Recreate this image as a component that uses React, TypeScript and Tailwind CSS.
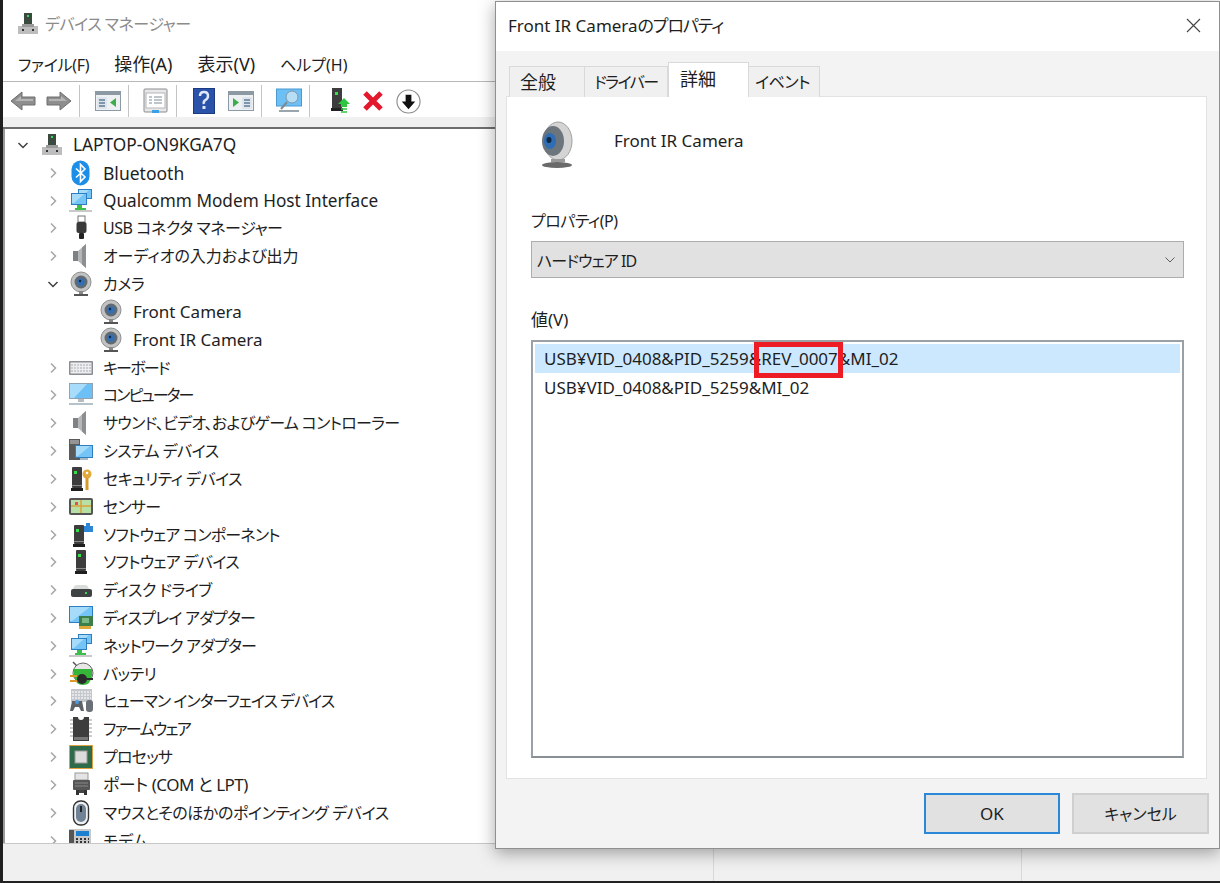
import React from "react";

const font = { fontFamily: '"Noto Sans","Noto Sans CJK JP",sans-serif' };

const S = ({ children, size = 26, vb = 26 }: { children: React.ReactNode; size?: number; vb?: number }) => (
  <svg width={size} height={size} viewBox={`0 0 ${vb} ${vb}`} className="shrink-0">{children}</svg>
);

const Tower = ({ x = 8, y = 1, w = 11, h = 23 }: { x?: number; y?: number; w?: number; h?: number }) => (
  <g>
    <rect x={x + 1} y={y} width={w - 2} height={h - 3} rx="1" fill="#3d3d3d" />
    <rect x={x + 3} y={y + 4} width="3" height="3" fill="#35e04a" />
    <rect x={x} y={y + h - 3} width={w} height="3" fill="#1f1f1f" />
    <rect x={x + 1} y={y + h - 6} width={w - 2} height="1" fill="#8a8a8a" />
  </g>
);
const Mon = ({ x, y, w, h }: { x: number; y: number; w: number; h: number }) => (
  <g>
    <rect x={x} y={y} width={w} height={h} fill="#2e7fc2" />
    <rect x={x + 1} y={y + 1} width={w - 2} height={h - 2} fill="#74c5f5" />
    <path d={`M${x + 1} ${y + 1}h${w - 4}l-${w - 6} ${h - 3}h-2z`} fill="#a6dcfa" />
  </g>
);
const Laptop = () => (
  <S size={24} vb={24}>
    <rect x="8" y="1" width="8" height="11" fill="#3a4a3e" />
    <rect x="11" y="3" width="2" height="2" fill="#3fd45a" />
    <path d="M2 14h20v8H2z" fill="#bdbdbd" />
    <path d="M6 12h12v3H6z" fill="#9a9a9a" />
    <rect x="6" y="17" width="2" height="2" fill="#333" />
    <rect x="16" y="17" width="2" height="2" fill="#333" />
  </S>
);
const Bluetooth = () => (
  <S>
    <rect x="3.500" y="0.500" width="18" height="25" rx="9" fill="#1c8ee8" />
    <path d="M8 8.500l9 8.500-4.500 4.500V4.500l4.500 4.500-9 8.500" fill="none" stroke="#fff" strokeWidth="1.600" />
  </S>
);
const Network = () => (
  <S>
    <Mon x={10} y={1} w={14} h={10} />
    <Mon x={3} y={5} w={16} h={12} />
    <path d="M9 17h5v3h4v2H7v-2h2z" fill="#3cc04a" />
    <rect x="1" y="22" width="23" height="2" fill="#c9c9c9" />
  </S>
);
const Usb = () => (
  <S>
    <rect x="10" y="1" width="7" height="6" fill="#fff" stroke="#777" />
    <rect x="8.500" y="7" width="10" height="11" rx="2" fill="#3a3a3a" />
    <rect x="11" y="18" width="5" height="6" rx="1" fill="#222" />
  </S>
);
const Speaker = () => (
  <S>
    <path d="M18 1v24L10 18H5V8h5z" fill="#b4b6b8" />
    <path d="M14 4.500l4-3.500v24l-4-3.500z" fill="#8c8f92" />
    <rect x="5" y="8" width="5" height="10" fill="#7f8285" />
  </S>
);
const Cam = ({ size = 26 }: { size?: number }) => (
  <S size={size}>
    <circle cx="13" cy="11" r="10" fill="#c2c2c2" stroke="#8f8f8f" />
    <circle cx="13" cy="11" r="6.500" fill="#5f6a75" />
    <circle cx="13" cy="11" r="3.500" fill="#2f6fb8" />
    <circle cx="12" cy="10" r="1.200" fill="#10243d" />
    <rect x="11" y="20" width="4" height="3" fill="#888" />
    <rect x="6" y="23" width="14" height="2" fill="#555" />
  </S>
);
const Keyboard = () => (
  <S>
    <rect x="1" y="6" width="24" height="14" rx="1" fill="#8a8d90" />
    <rect x="2.500" y="7.500" width="21" height="11" fill="#eceef0" />
    <path d="M3 10h20M3 13h20M3 16h20" stroke="#a9acaf" strokeWidth="1.200" strokeDasharray="2 1" />
  </S>
);
const Computer = () => (
  <S>
    <rect x="1" y="1" width="24" height="16" fill="#8fa3b3" />
    <rect x="2" y="2" width="22" height="14" fill="#6cc0f5" />
    <path d="M2 2h17L6 16H2z" fill="#a8dcfb" />
    <rect x="10" y="17" width="6" height="3" fill="#b8bdc2" />
    <rect x="1" y="21" width="24" height="2" fill="#b4c2cc" />
  </S>
);
const System = () => (
  <S>
    <rect x="1" y="1" width="11" height="21" fill="#5a5a5a" />
    <path d="M2 3h9M2 5h9" stroke="#cfcfcf" />
    <Mon x={7} y={7} w={18} h={13} />
    <rect x="12" y="20" width="8" height="2" fill="#a9b8c2" />
  </S>
);
const Security = () => (
  <S>
    <Tower x={3} y={1} w={12} h={24} />
    <circle cx="19" cy="8" r="4.500" fill="#e0a93a" />
    <circle cx="19" cy="7" r="1.300" fill="#fff" />
    <path d="M17.500 12h3v12h-3z" fill="#d59a2a" />
  </S>
);
const Sensor = () => (
  <S>
    <rect x="1" y="4" width="24" height="17" rx="2" fill="#555" />
    <rect x="3" y="6" width="20" height="13" fill="#b8e0a5" />
    <path d="M13 6v13M3 12h20" stroke="#d9a13a" strokeWidth="1.500" />
    <rect x="7" y="8" width="3" height="3" fill="#e0505a" />
  </S>
);
const SoftComp = () => (
  <S>
    <Tower x={5} y={3} w={12} h={22} />
    <path d="M18 1h4v3h3v6h-9v-6h2z" fill="#2e86d6" />
  </S>
);
const SoftDev = () => (
  <S><Tower x={7} y={1} w={12} h={24} /></S>
);
const Disk = () => (
  <S>
    <path d="M5 12q1-4 4-4h8q3 0 4 4z" fill="#d9dcd9" />
    <rect x="3" y="12" width="21" height="8" rx="2" fill="#3f4242" />
    <rect x="17" y="15" width="2" height="2" fill="#3fd45a" />
  </S>
);
const Display = () => (
  <S>
    <Mon x={1} y={1} w={24} h={17} />
    <rect x="11" y="11" width="14" height="10" fill="#3c7f4a" />
    <rect x="14" y="13" width="7" height="5" fill="#7cb887" />
    <rect x="11" y="21" width="12" height="3" fill="#e0a93a" />
  </S>
);
const Battery = () => (
  <S>
    <path d="M5 1l5 5" stroke="#555" strokeWidth="1.500" />
    <circle cx="15" cy="12" r="10" fill="#e7e7e7" stroke="#666" />
    <path d="M6 8h18v6q-1 10-9 10t-9-10z" fill="#35b53a" />
    <circle cx="14" cy="18" r="5" fill="#2a2a2a" />
    <path d="M2 15h7M2 20h7" stroke="#d99a2a" strokeWidth="2" />
    <path d="M18 18h7" stroke="#2a2a2a" strokeWidth="2" />
  </S>
);
const Hid = () => (
  <S>
    <rect x="3" y="1" width="21" height="13" fill="#c4c8cc" />
    <path d="M4 4h19M4 7h19M4 10h19" stroke="#eef0f2" strokeWidth="1.400" strokeDasharray="2 1" />
    <path d="M2 23l2-10h10l2 10h-3l-2-4H7l-2 4z" fill="#5c6268" />
    <circle cx="9" cy="14" r="2" fill="#4a9be0" />
    <rect x="18" y="12" width="7" height="12" rx="3" fill="#6a7076" />
  </S>
);
const Firmware = () => (
  <S>
    <path d="M5 1h5a3 3 0 0 0 6 0h5v24H5z" fill="#3d3d3d" />
    <path d="M2 4h3M2 8h3M2 12h3M2 16h3M2 20h3M21 4h3M21 8h3M21 12h3M21 16h3M21 20h3" stroke="#999" />
    <rect x="6" y="21" width="14" height="3" fill="#777" />
  </S>
);
const Cpu = () => (
  <S>
    <rect x="1" y="1" width="24" height="24" fill="#e0a040" />
    <rect x="2" y="2" width="22" height="22" fill="#2f6b4a" />
    <rect x="7" y="7" width="12" height="12" fill="#dcdcdc" stroke="#999" />
  </S>
);
const Port = () => (
  <S>
    <rect x="7" y="1" width="13" height="7" fill="#e4e4e4" stroke="#999" />
    <rect x="5" y="8" width="17" height="10" rx="1" fill="#555" />
    <path d="M7 11h13M7 14h13" stroke="#888" />
    <rect x="8" y="18" width="3" height="5" fill="#333" />
    <rect x="16" y="18" width="3" height="5" fill="#333" />
    <rect x="11" y="18" width="5" height="3" fill="#444" />
  </S>
);
const Mouse = () => (
  <S>
    <rect x="5.500" y="1" width="15" height="24" rx="7" fill="#eef0f2" stroke="#333" strokeWidth="1.400" />
    <rect x="8" y="4" width="10" height="18" rx="5" fill="#6f8296" />
    <rect x="12" y="6" width="2" height="6" fill="#222" />
  </S>
);
const Modem = () => (
  <S>
    <rect x="1" y="1" width="22" height="24" fill="#c8c8c8" />
    <rect x="1" y="2" width="5" height="21" fill="#555" />
    <rect x="8" y="3" width="13" height="5" fill="#1c7fd0" />
    <path d="M8 11h13M8 14h13M8 17h13" stroke="#333" strokeWidth="2" strokeDasharray="2 2" />
  </S>
);

const Chevron = ({ open }: { open?: boolean }) => (
  <svg width="12" height="12" viewBox="0 0 12 12" className="shrink-0">
    {open ? (
      <path d="M1.500 4l4.500 4.500L10.500 4" fill="none" stroke="#404040" strokeWidth="1.500" />
    ) : (
      <path d="M4 1.500L8.500 6 4 10.500" fill="none" stroke="#a6a6a6" strokeWidth="1.500" />
    )}
  </svg>
);

const rows: { label: string; icon: React.ReactNode; open?: boolean; child?: boolean; t: string }[] = [
  { label: "Bluetooth", icon: <Bluetooth />, t: "text-[17.500px]" },
  { label: "Qualcomm Modem Host Interface", icon: <Network />, t: "text-[17.200px]" },
  { label: "USB コネクタ マネージャー", icon: <Usb />, t: "text-[16px] tracking-[-0.450px]" },
  { label: "オーディオの入力および出力", icon: <Speaker />, t: "text-[16px]" },
  { label: "カメラ", icon: <Cam />, open: true, t: "text-[16px] tracking-[-0.500px]" },
  { label: "Front Camera", icon: <Cam />, child: true, t: "text-[17px]" },
  { label: "Front IR Camera", icon: <Cam />, child: true, t: "text-[17px]" },
  { label: "キーボード", icon: <Keyboard />, t: "text-[16px] tracking-[-1.800px]" },
  { label: "コンピューター", icon: <Computer />, t: "text-[16px] tracking-[-2px]" },
  { label: "サウンド、ビデオ、およびゲーム コントローラー", icon: <Speaker />, t: "text-[16px] tracking-[-0.700px]" },
  { label: "システム デバイス", icon: <System />, t: "text-[16px] tracking-[-0.550px]" },
  { label: "セキュリティ デバイス", icon: <Security />, t: "text-[16px] tracking-[-0.550px]" },
  { label: "センサー", icon: <Sensor />, t: "text-[16px] tracking-[-0.750px]" },
  { label: "ソフトウェア コンポーネント", icon: <SoftComp />, t: "text-[16px] tracking-[-0.800px]" },
  { label: "ソフトウェア デバイス", icon: <SoftDev />, t: "text-[16px] tracking-[-0.700px]" },
  { label: "ディスク ドライブ", icon: <Disk />, t: "text-[16px] tracking-[-0.550px]" },
  { label: "ディスプレイ アダプター", icon: <Display />, t: "text-[16px] tracking-[-0.800px]" },
  { label: "ネットワーク アダプター", icon: <Network />, t: "text-[16px] tracking-[-0.800px]" },
  { label: "バッテリ", icon: <Battery />, t: "text-[16px] tracking-[-0.500px]" },
  { label: "ヒューマン インターフェイス デバイス", icon: <Hid />, t: "text-[16px] tracking-[-1px]" },
  { label: "ファームウェア", icon: <Firmware />, t: "text-[16px] tracking-[-1.700px]" },
  { label: "プロセッサ", icon: <Cpu />, t: "text-[16px] tracking-[-0.800px]" },
  { label: "ポート (COM と LPT)", icon: <Port />, t: "text-[17px] tracking-[-0.500px]" },
  { label: "マウスとそのほかのポインティング デバイス", icon: <Mouse />, t: "text-[16px] tracking-[-0.400px]" },
  { label: "モデム", icon: <Modem />, t: "text-[16px]" },
];

const Sep = () => <div className="w-px h-[32px] bg-[#c4c4c4] shrink-0" />;

const ArrowBtn = ({ flip }: { flip?: boolean }) => (
  <svg width="26" height="22" viewBox="0 0 26 22" style={flip ? { transform: "scaleX(-1)" } : undefined}>
    <path d="M1 11L12 2v5h13v8H12v5z" fill="#8e8e8e" stroke="#6f6f6f" />
    <path d="M5 11l6-5v3h12v2z" fill="#b5b5b5" />
  </svg>
);
const WinIcon = ({ right }: { right?: boolean }) => (
  <svg width="26" height="22" viewBox="0 0 26 22">
    <rect x="0.500" y="1.500" width="25" height="19" fill="#eef1f3" stroke="#8d9aa3" />
    <rect x="1" y="2" width="24" height="3" fill="#8d9aa3" />
    {right ? (
      <>
        <path d="M5 8l6 4.500L5 17z" fill="#3fae4a" />
        <rect x="14" y="7" width="10" height="12" fill="#dfe5ea" />
        <path d="M16 10h6M16 13h6M16 16h6" stroke="#5b7c99" strokeWidth="1.500" />
      </>
    ) : (
      <>
        <rect x="2" y="7" width="10" height="12" fill="#dfe5ea" />
        <path d="M4 10h6M4 13h6M4 16h6" stroke="#5b7c99" strokeWidth="1.500" />
        <path d="M21 8l-6 4.500L21 17z" fill="#3fae4a" />
      </>
    )}
  </svg>
);

function Toolbar() {
  return (
    <div className="h-[35px] flex items-center pl-[7px] pt-[3px] shrink-0">
      <ArrowBtn />
      <div className="w-[10px]" />
      <ArrowBtn flip />
      <div className="w-[7px]" />
      <Sep />
      <div className="w-[15px]" />
      <WinIcon />
      <div className="w-[7px]" />
      <Sep />
      <div className="w-[14px]" />
      <svg width="25" height="26" viewBox="0 0 25 26">
        <rect x="1" y="1" width="23" height="23" rx="1" fill="#e6e8ea" stroke="#8c8c8c" />
        <rect x="3" y="5" width="19" height="15" fill="#fff" stroke="#b5b5b5" />
        <path d="M6 9h3M6 12h3M6 15h3M11 9h8M11 12h8M11 15h8" stroke="#7d8c99" />
        <rect x="9" y="22" width="7" height="3" fill="#39a0e8" />
      </svg>
      <div className="w-[8px]" />
      <Sep />
      <div className="w-[16px]" />
      <svg width="22" height="26" viewBox="0 0 22 26">
        <rect x="0.500" y="0.500" width="21" height="25" fill="#2a52a8" stroke="#1c3a80" />
        <path d="M7 8q0-4 4-4t4 4q0 2.500-2.500 4T11 16" fill="none" stroke="#dfe8fb" strokeWidth="2.500" />
        <rect x="9.500" y="18" width="3" height="3" fill="#dfe8fb" />
      </svg>
      <div className="w-[13px]" />
      <WinIcon right />
      <div className="w-[7px]" />
      <Sep />
      <div className="w-[14px]" />
      <svg width="26" height="26" viewBox="0 0 26 26">
        <rect x="0.500" y="1" width="25" height="17" fill="#6cc0f5" stroke="#4a9ad0" />
        <circle cx="16" cy="9" r="6" fill="#b7def5" stroke="#7e97a8" />
        <path d="M11 14l-6 7" stroke="#7e8a92" strokeWidth="2" />
        <rect x="3" y="22" width="20" height="2" fill="#9aa5ad" />
      </svg>
      <div className="w-[7px]" />
      <Sep />
      <div className="w-[20px]" />
      <svg width="22" height="28" viewBox="0 0 22 28">
        <rect x="2" y="1" width="10" height="20" fill="#3d3d3d" />
        <rect x="5" y="5" width="3" height="3" fill="#35e04a" />
        <rect x="1" y="21" width="12" height="3" fill="#222" />
        <path d="M8 17l6-6 6 6h-3v3h-6v-3z" fill="#2ec63f" />
        <path d="M11 22h6M11 25h6" stroke="#2ec63f" strokeWidth="1.500" />
      </svg>
      <div className="w-[10px]" />
      <svg width="22" height="22" viewBox="0 0 22 22">
        <path d="M3 3l16 16M19 3L3 19" stroke="#e3182d" strokeWidth="5" />
      </svg>
      <div className="w-[12px]" />
      <svg width="25" height="25" viewBox="0 0 26 26">
        <circle cx="13" cy="13" r="12" fill="#fff" stroke="#8d8d8d" strokeWidth="1.200" />
        <path d="M10 6h6v7h4l-7 8-7-8h4z" fill="#111" />
      </svg>
    </div>
  );
}

function DeviceManager() {
  return (
    <div className="w-full h-[881px] bg-white border-l-[3px] border-l-[#1f1f1f] flex flex-col">
      <div className="h-[48px] flex items-center pl-[13px] gap-[5px] shrink-0">
        <Laptop />
        <span className="text-[16px] text-[#8c8c8c] tracking-[-0.500px]">デバイス マネージャー</span>
      </div>
      <div className="h-[34px] flex items-center pl-[15px] gap-[25px] text-[#1e1e1e] border-b border-b-[#b8b8b8] shrink-0">
        <span className="text-[16px] tracking-[-0.300px]">ファイル(F)</span>
        <span className="text-[18px]">操作(A)</span>
        <span className="text-[18px]">表示(V)</span>
        <span className="text-[16px]">ヘルプ(H)</span>
      </div>
      <Toolbar />
      <div className="h-[10px] bg-[#f0f0f0] shrink-0" />
      <div className="h-[2px] bg-[#6d6d6d] shrink-0" />
      <div className="flex-1 min-h-0 overflow-hidden border-l-2 border-l-[#9a9a9a] pt-[2px] pl-[12px]">
        <div className="h-[27.830px] flex items-center">
          <Chevron open />
          <div className="w-[11px]" />
          <Laptop />
          <span className="ml-[9px] text-[17.300px] text-[#1e1e1e]">LAPTOP-ON9KGA7Q</span>
        </div>
        {rows.map((r) => (
          <div key={r.label} className="h-[27.830px] flex items-center">
            {r.child ? (
              <div className="w-[81px] shrink-0" />
            ) : (
              <div className="w-[51px] shrink-0 pl-[30px] flex">
                <Chevron open={r.open} />
              </div>
            )}
            {r.icon}
            <span className={`ml-[9px] text-[#1e1e1e] whitespace-nowrap ${r.t}`}>{r.label}</span>
          </div>
        ))}
      </div>
      <div className="h-[38px] bg-[#f0f0f0] border-t border-t-[#c8c8c8] shrink-0 flex">
        <div className="w-[711px] border-r border-r-[#d8d8d8]" />
        <div className="w-[308px] border-r border-r-[#d8d8d8]" />
      </div>
    </div>
  );
}

function Dialog() {
  return (
    <div className="absolute left-[495px] top-[1px] w-[725px] h-[848px] bg-[#f3f3f3] border border-[#8f8f8f] shadow-[0_4px_16px_rgba(0,0,0,0.350)] flex flex-col text-[#1e1e1e]">
      <div className="h-[49px] bg-white flex items-center justify-between pl-[12px] pr-[18px] pb-[2px] shrink-0">
        <span className="text-[17px]">Front IR Camera<span className="tracking-[-1.100px]">のプロパティ</span></span>
        <svg width="15" height="15" viewBox="0 0 15 15">
          <path d="M1 1l13 13M14 1L1 14" stroke="#444" strokeWidth="1.100" />
        </svg>
      </div>
      <div className="flex items-end pl-[13px] mt-[11px] h-[35px] shrink-0 relative z-10 -mb-px whitespace-nowrap">
        <div className="w-[76px] h-[31px] bg-[#f0f0f0] border border-b-0 border-[#d9d9d9] flex items-center pl-[10px] text-[18px]">全般</div>
        <div className="w-[83px] h-[31px] bg-[#f0f0f0] border border-b-0 border-l-0 border-[#d9d9d9] flex items-center pl-[9px] text-[16px] tracking-[-1.500px]">ドライバー</div>
        <div className="w-[81px] h-[35px] bg-white border border-b-0 border-[#d9d9d9] flex items-start pt-[3px] pl-[11px] text-[18px]">詳細</div>
        <div className="w-[71px] h-[31px] bg-[#f0f0f0] border border-b-0 border-l-0 border-[#d9d9d9] flex items-center pl-[6px] text-[16px] tracking-[-0.500px]">イベント</div>
      </div>
      <div className="ml-[10px] mr-[12px] h-[683px] bg-white border border-[#e2e2e2] pt-[24px] pl-[24px] pr-[22px] shrink-0 flex flex-col">
        <div className="flex items-center h-[48px] shrink-0">
          <svg width="34" height="48" viewBox="0 0 34 48" className="shrink-0 ml-[8px]">
            <ellipse cx="19" cy="20" rx="14" ry="19" fill="#d4d4d4" stroke="#a0a0a0" />
            <ellipse cx="14" cy="20" rx="11" ry="15" fill="#6d757c" />
            <ellipse cx="11" cy="20" rx="6" ry="8" fill="#2f6db5" />
            <ellipse cx="10" cy="19" rx="2.500" ry="3" fill="#0e2742" />
            <path d="M12 38h14v3H12z" fill="#9a9a9a" />
            <ellipse cx="18" cy="44" rx="15" ry="3" fill="#6a6a6a" />
          </svg>
          <span className="ml-[41px] mb-[8px] text-[17px]">Front IR Camera</span>
        </div>
        <div className="mt-[40px] text-[16px] tracking-[-0.500px] leading-[24px]">プロパティ(P)</div>
        <div className="mt-[8px] h-[37px] bg-[#e1e1e1] border border-[#adadad] flex items-center justify-between pl-[5px] pr-[8px] shrink-0">
          <span className="text-[16px] tracking-[-0.900px] pt-[2px]">ハードウェア ID</span>
          <svg width="10" height="6" viewBox="0 0 10 6"><path d="M0.500 0.500L5 5l4.500-4.500" fill="none" stroke="#606060" /></svg>
        </div>
        <div className="mt-[30px] text-[17px] leading-[24px]">値(V)</div>
        <div className="relative mt-[8px] h-[418px] border-2 border-[#9aa0a6] border-b-[#8a8f94] p-[2px] text-[17px] shrink-0">
          <div className="h-[29px] bg-[#cce8ff] pl-[9px] flex items-center">USB¥VID_0408&PID_5259&REV_0007&MI_02</div>
          <div className="h-[29px] pl-[9px] flex items-center">USB¥VID_0408&PID_5259&MI_02</div>
          <div className="absolute left-[221px] top-0 w-[89px] h-[36px] border-[5px] border-[#ed1c24]" />
        </div>
      </div>
      <div className="flex justify-end gap-[12px] mt-[14px] pr-[10px]">
        <div className="w-[136px] h-[41px] bg-[#e1e1e1] border-2 border-[#2b88d8] flex items-center justify-center text-[17px]">OK</div>
        <div className="w-[137px] h-[41px] bg-[#e1e1e1] border-2 border-[#cfcfcf] flex items-center justify-center text-[16px]">キャンセル</div>
      </div>
    </div>
  );
}

export default function App() {
  return (
    <div className={'relative w-[1220px] h-[883px] bg-[#222] overflow-hidden [font-feature-settings:"palt"]'} style={font}>
      <DeviceManager />
      <Dialog />
    </div>
  );
}
